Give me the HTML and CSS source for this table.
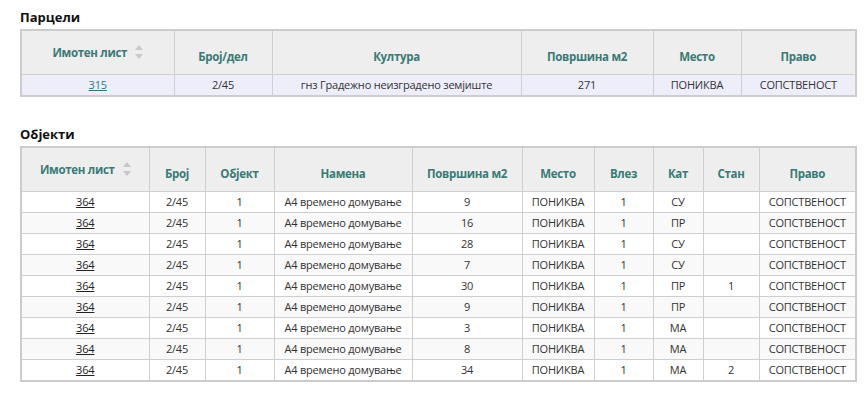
FILE: index.html
```html
<!DOCTYPE html>
<html lang="mk">
<head>
<meta charset="utf-8">
<link rel="stylesheet" href="styles.css">
</head>
<body>
<section class="block">
  <h3 class="title">Парцели</h3>
  <table class="grid grid-parcels">
    <colgroup>
      <col style="width:153px"><col style="width:98px"><col style="width:249px"><col style="width:132px"><col style="width:88px"><col>
    </colgroup>
    <thead>
      <tr>
        <th><span class="sortable">Имотен лист <span class="sort"><i class="up"></i><i class="down"></i></span></span></th>
        <th>Број/дел</th>
        <th>Култура</th>
        <th>Површина м2</th>
        <th>Место</th>
        <th>Право</th>
      </tr>
    </thead>
    <tbody>
      <tr class="selected">
        <td><a href="#" class="link-teal">315</a></td>
        <td>2/45</td>
        <td>гнз Градежно неизградено земјиште</td>
        <td>271</td>
        <td>ПОНИКВА</td>
        <td>СОПСТВЕНОСТ</td>
      </tr>
    </tbody>
  </table>
</section>

<section class="block block-objects">
  <h3 class="title">Објекти</h3>
  <table class="grid grid-objects">
    <colgroup>
      <col style="width:128px"><col style="width:56px"><col style="width:69px"><col style="width:138px"><col style="width:110px"><col style="width:72px"><col style="width:59px"><col style="width:50px"><col style="width:56px"><col>
    </colgroup>
    <thead>
      <tr>
        <th><span class="sortable">Имотен лист <span class="sort"><i class="up"></i><i class="down"></i></span></span></th>
        <th>Број</th>
        <th>Објект</th>
        <th>Намена</th>
        <th>Површина м2</th>
        <th>Место</th>
        <th>Влез</th>
        <th>Кат</th>
        <th>Стан</th>
        <th>Право</th>
      </tr>
    </thead>
    <tbody>
      <tr><td><a href="#">364</a></td><td>2/45</td><td>1</td><td>А4 времено домување</td><td>9</td><td>ПОНИКВА</td><td>1</td><td>СУ</td><td></td><td>СОПСТВЕНОСТ</td></tr>
      <tr><td><a href="#">364</a></td><td>2/45</td><td>1</td><td>А4 времено домување</td><td>16</td><td>ПОНИКВА</td><td>1</td><td>ПР</td><td></td><td>СОПСТВЕНОСТ</td></tr>
      <tr><td><a href="#">364</a></td><td>2/45</td><td>1</td><td>А4 времено домување</td><td>28</td><td>ПОНИКВА</td><td>1</td><td>СУ</td><td></td><td>СОПСТВЕНОСТ</td></tr>
      <tr><td><a href="#">364</a></td><td>2/45</td><td>1</td><td>А4 времено домување</td><td>7</td><td>ПОНИКВА</td><td>1</td><td>СУ</td><td></td><td>СОПСТВЕНОСТ</td></tr>
      <tr><td><a href="#">364</a></td><td>2/45</td><td>1</td><td>А4 времено домување</td><td>30</td><td>ПОНИКВА</td><td>1</td><td>ПР</td><td>1</td><td>СОПСТВЕНОСТ</td></tr>
      <tr><td><a href="#">364</a></td><td>2/45</td><td>1</td><td>А4 времено домување</td><td>9</td><td>ПОНИКВА</td><td>1</td><td>ПР</td><td></td><td>СОПСТВЕНОСТ</td></tr>
      <tr><td><a href="#">364</a></td><td>2/45</td><td>1</td><td>А4 времено домување</td><td>3</td><td>ПОНИКВА</td><td>1</td><td>МА</td><td></td><td>СОПСТВЕНОСТ</td></tr>
      <tr><td><a href="#">364</a></td><td>2/45</td><td>1</td><td>А4 времено домување</td><td>8</td><td>ПОНИКВА</td><td>1</td><td>МА</td><td></td><td>СОПСТВЕНОСТ</td></tr>
      <tr><td><a href="#">364</a></td><td>2/45</td><td>1</td><td>А4 времено домување</td><td>34</td><td>ПОНИКВА</td><td>1</td><td>МА</td><td>2</td><td>СОПСТВЕНОСТ</td></tr>
    </tbody>
  </table>
</section>
</body>
</html>
```

FILE: styles.css
```css
html, body {
  margin: 0;
  padding: 0;
  background: #fff;
}
body {
  padding: 10px 9px 0 20px;
  font-family: "Open Sans", "Noto Sans", "DejaVu Sans", sans-serif;
  color: #333;
}
.block {
  margin: 0;
}
.block-objects {
  margin-top: 30px;
}
.title {
  margin: 0 0 4px 0;
  font-size: 13px;
  line-height: 15px;
  font-weight: 700;
  color: #111;
}
.grid {
  width: 837px;
  border-collapse: collapse;
  table-layout: fixed;
  border: 2px solid #cccccc;
  font-size: 11px;
  letter-spacing: -0.2px;
}
.grid th,
.grid td {
  border: 1px solid #cfcfcf;
  text-align: center;
  padding: 0 4px;
  white-space: nowrap;
  overflow: hidden;
}
.grid th {
  background: #eeeeee;
  color: #3a7a76;
  font-weight: 700;
  font-size: 11.5px;
  letter-spacing: -0.3px;
  padding-top: 8px;
  vertical-align: middle;
}
.grid-parcels thead tr { height: 44px; }
.grid-parcels tbody tr { height: 22px; }
.grid-objects thead tr { height: 44px; }
.grid-objects tbody tr { height: 21px; }
.grid-objects tbody tr:last-child { height: 22px; }
.grid-objects tbody tr:nth-child(even) td { background: #f9f9f9; }
.grid tr.selected td { background: #eeeefb; }
.sortable {
  display: inline-flex;
  align-items: center;
  gap: 8px;
  position: relative;
  top: -4px;
}
.sort {
  display: inline-flex;
  flex-direction: column;
  gap: 4px;
}
.sort i {
  display: block;
  width: 0;
  height: 0;
  border-left: 4px solid transparent;
  border-right: 4px solid transparent;
}
.sort .up { border-bottom: 5px solid #c8c8c8; }
.sort .down { border-top: 5px solid #c8c8c8; }
.grid a {
  color: #222;
  text-decoration: underline;
}
.grid a.link-teal {
  color: #2c7a78;
}
```
